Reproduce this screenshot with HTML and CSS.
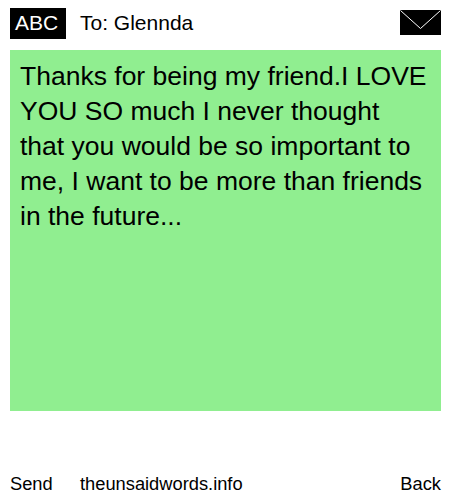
FILE: index.html
```html
<!DOCTYPE html>
<html>
<head>
    <title>To: Glennda</title>
    <link rel="stylesheet" href="styles.css">
</head>
<body>
    <div class="page">
        <div class="header">
            <div class="abc">ABC</div>
            <div class="to">To: Glennda</div>
            <svg class="envelope" width="41" height="25" viewBox="0 0 41 25">
                <rect width="41" height="25" fill="#000"/>
                <path d="M0.5 0.5 L20.5 18.5 L40.5 0.5" fill="none" stroke="#fff" stroke-width="1"/>
            </svg>
        </div>
        <div class="message">Thanks for being my friend.I LOVE YOU SO much I never thought that you would be so important to me, I want to be more than friends in the future...</div>
        <div class="footer">
            <div class="send">Send</div>
            <div class="site">theunsaidwords.info</div>
            <div class="back">Back</div>
        </div>
    </div>
</body>
</html>
```

FILE: styles.css
```css
html, body {
    margin: 0;
    padding: 0;
    background: #fff;
}
body {
    font-family: "Liberation Sans", Arial, sans-serif;
    color: #000;
}
.page {
    width: 431px;
    height: 500px;
    padding: 8px 9px 0 10px;
    display: flex;
    flex-direction: column;
}
.header {
    display: flex;
    align-items: flex-start;
    height: 31px;
    font-size: 21px;
}
.abc {
    width: 56px;
    height: 31px;
    padding-left: 5px;
    box-sizing: border-box;
    line-height: 29px;
    background: #000;
    color: #fff;
}
.to {
    margin-left: 14px;
    flex: 1;
    line-height: 30px;
}
.envelope {
    display: block;
    margin-top: 2px;
}
.message {
    margin-top: 11px;
    height: 361px;
    padding: 9px 13px 0 10px;
    box-sizing: border-box;
    background: #90ee90;
    font-size: 26.5px;
    line-height: 35px;
}
.footer {
    margin-top: 62px;
    display: flex;
    font-size: 18.3px;
    line-height: 22px;
}
.send {
    width: 70px;
}
.site {
    flex: 1;
}
```
